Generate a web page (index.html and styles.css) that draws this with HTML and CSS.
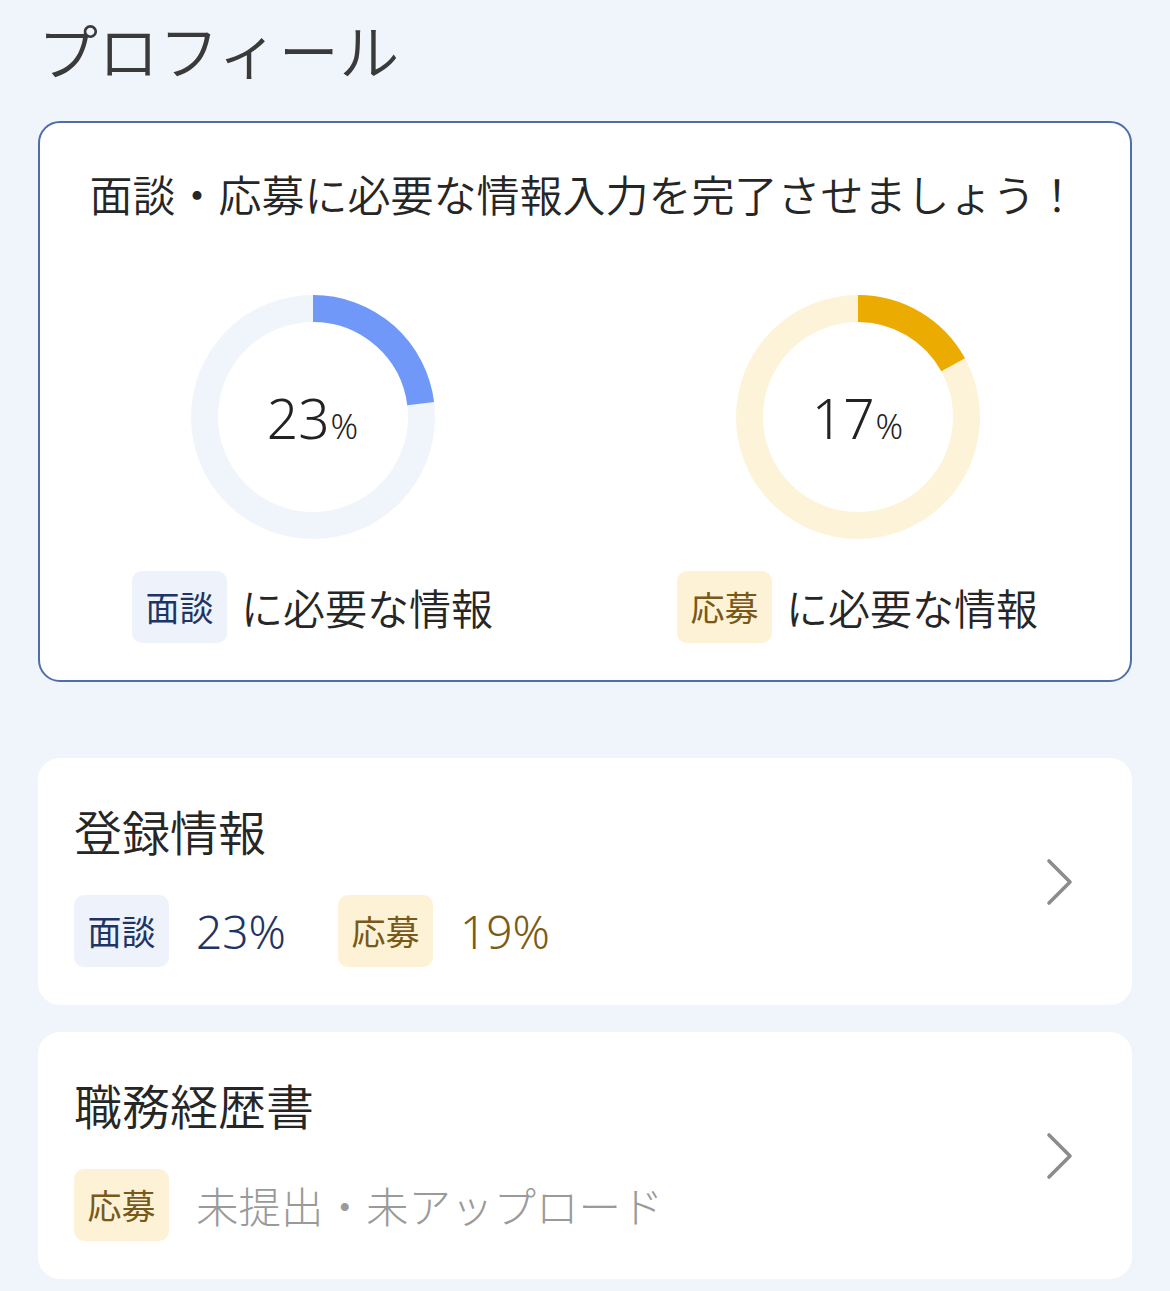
FILE: index.html
```html
<!DOCTYPE html>
<html lang="ja">
<head>
<meta charset="utf-8">
<link rel="stylesheet" href="styles.css">
</head>
<body>
<main class="page">
  <h1 class="page-title">プロフィール</h1>

  <section class="summary">
    <p class="summary-lead">面談・応募に必要な情報入力を完了させましょう！</p>
    <div class="donuts">
      <div class="donut-col">
        <div class="donut">
          <svg class="donut-svg" viewBox="0 0 244 244" width="244" height="244">
            <circle cx="122" cy="122" r="108.5" fill="none" stroke="#f0f4fb" stroke-width="27"/>
            <circle cx="122" cy="122" r="108.5" fill="none" stroke="#6f98f8" stroke-width="27" stroke-dasharray="156.8 681.7" transform="rotate(-90 122 122)"/>
          </svg>
          <div class="donut-value"><span class="num">23</span><span class="pct">%</span></div>
        </div>
        <div class="donut-label"><span class="badge badge-blue">面談</span><span class="label-text">に必要な情報</span></div>
      </div>
      <div class="donut-col">
        <div class="donut">
          <svg class="donut-svg" viewBox="0 0 244 244" width="244" height="244">
            <circle cx="122" cy="122" r="108.5" fill="none" stroke="#fdf3d9" stroke-width="27"/>
            <circle cx="122" cy="122" r="108.5" fill="none" stroke="#ebab00" stroke-width="27" stroke-dasharray="115.9 681.7" transform="rotate(-90 122 122)"/>
          </svg>
          <div class="donut-value"><span class="num">17</span><span class="pct">%</span></div>
        </div>
        <div class="donut-label"><span class="badge badge-yellow">応募</span><span class="label-text">に必要な情報</span></div>
      </div>
    </div>
  </section>

  <a class="item item-first" href="#">
    <div class="item-body">
      <div class="item-title">登録情報</div>
      <div class="item-meta">
        <span class="badge badge-blue">面談</span><span class="val val-blue">23%</span>
        <span class="badge badge-yellow badge-gap">応募</span><span class="val val-yellow">19%</span>
      </div>
    </div>
    <svg class="chev" viewBox="0 0 30 50" width="30" height="50"><polyline points="5,4 26,25 5,46" fill="none" stroke="#8c8c8c" stroke-width="3.6" stroke-linecap="round" stroke-linejoin="round"/></svg>
  </a>

  <a class="item" href="#">
    <div class="item-body">
      <div class="item-title">職務経歴書</div>
      <div class="item-meta">
        <span class="badge badge-yellow">応募</span><span class="val val-gray">未提出・未アップロード</span>
      </div>
    </div>
    <svg class="chev" viewBox="0 0 30 50" width="30" height="50"><polyline points="5,4 26,25 5,46" fill="none" stroke="#8c8c8c" stroke-width="3.6" stroke-linecap="round" stroke-linejoin="round"/></svg>
  </a>
</main>
</body>
</html>
```

FILE: styles.css
```css
html, body {
  margin: 0;
  padding: 0;
  background: #f0f4fb;
}
body {
  font-family: "Noto Sans CJK JP", "Noto Sans", sans-serif;
  font-weight: 350;
  color: #222;
}
.page {
  padding: 6px 38px 0 38px;
  box-sizing: border-box;
  width: 1170px;
}
.page-title {
  margin: 0;
  font-size: 60px;
  font-weight: 350;
  line-height: 86px;
  color: #3a3a3a;
  letter-spacing: 0.5px;
}
.summary {
  margin-top: 29px;
  background: #fff;
  border: 2px solid #4d6ea9;
  border-radius: 22px;
  height: 561px;
  box-sizing: border-box;
  padding-top: 40px;
}
.summary-lead {
  margin: 0;
  text-align: center;
  font-size: 43px;
  line-height: 60px;
  color: #262626;
  padding-right: 2px;
}
.donuts {
  display: grid;
  grid-template-columns: 1fr 1fr;
  margin-top: 72px;
}
.donut-col {
  display: flex;
  flex-direction: column;
  align-items: center;
}
.donut {
  display: grid;
  width: 244px;
  height: 244px;
}
.donut-svg, .donut-value {
  grid-area: 1 / 1;
}
.donut-value {
  display: flex;
  align-items: baseline;
  justify-content: center;
  align-self: center;
  font-family: "Noto Sans", sans-serif;
  font-weight: 350;
  color: #222;
}
.num {
  font-size: 55px;
  line-height: 1;
}
.pct {
  font-size: 34px;
  line-height: 1;
  margin-left: 1px;
}
.donut-label {
  display: flex;
  align-items: center;
  margin-top: 32px;
}
.badge {
  display: inline-flex;
  align-items: center;
  justify-content: center;
  width: 95px;
  height: 72px;
  border-radius: 10px;
  font-size: 34px;
  font-weight: 400;
  line-height: 1;
  box-sizing: border-box;
}
.badge-blue {
  background: #eef2fa;
  color: #1d3566;
}
.badge-yellow {
  background: #fdf2d5;
  color: #78591a;
}
.label-text {
  margin-left: 14px;
  font-size: 42px;
  line-height: 1;
  color: #262626;
}
.item {
  display: flex;
  align-items: center;
  background: #fff;
  border-radius: 22px;
  height: 247px;
  box-sizing: border-box;
  padding: 0 58px 0 36px;
  text-decoration: none;
  color: inherit;
  margin-top: 27px;
}
.item-first {
  margin-top: 76px;
}
.item-body {
  flex: 1;
  align-self: flex-start;
  padding-top: 42px;
}
.item-title {
  font-size: 48px;
  line-height: 60px;
  color: #262626;
}
.item-meta {
  display: flex;
  align-items: center;
  margin-top: 35px;
}
.val {
  margin-left: 27px;
  font-size: 46px;
  line-height: 1;
  font-family: "Noto Sans", "Noto Sans CJK JP", sans-serif;
  font-weight: 300;
}
.val-blue { color: #1d3566; }
.val-yellow { color: #7a5c16; }
.val-gray {
  color: #9a9a9a;
  font-family: "Noto Sans CJK JP", sans-serif;
  font-size: 42.5px;
}
.badge-gap {
  margin-left: 52px;
}
.chev {
  display: block;
  flex: none;
}
```
